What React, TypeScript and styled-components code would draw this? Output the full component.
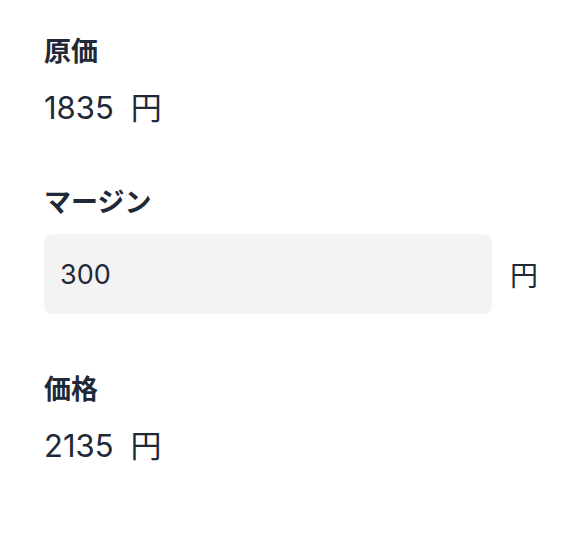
import styled, { createGlobalStyle } from "styled-components";

const GlobalStyle = createGlobalStyle`
  html, body {
    margin: 0;
    padding: 0;
    background: #ffffff;
  }
  body {
    font-family: Inter, "Noto Sans CJK JP", sans-serif;
    color: #1f2937;
  }
`;

const Form = styled.div`
  display: flex;
  flex-direction: column;
  gap: 50px;
  padding: 32px 48px 0 44px;
  max-width: 494px;
`;

const Field = styled.div`
  display: flex;
  flex-direction: column;
  gap: 11px;
`;

const Label = styled.label`
  font-size: 27px;
  font-weight: 700;
  line-height: 40px;
  color: #1f2937;
`;

const Value = styled.div`
  display: flex;
  align-items: center;
  gap: 17px;
  font-size: 31px;
  line-height: 50px;
  color: #1f2937;
`;

const InputRow = styled.div`
  display: flex;
  align-items: center;
  gap: 18px;
  margin-bottom: 6px;
`;

const Input = styled.input`
  flex: 1;
  min-width: 0;
  height: 80px;
  box-sizing: border-box;
  padding: 0 16px;
  border: none;
  border-radius: 8px;
  background: #f3f3f3;
  font-family: Inter, "Noto Sans CJK JP", sans-serif;
  font-size: 27px;
  color: #1f2937;
  outline: none;
`;

const Unit = styled.span<{ $size?: number }>`
  font-size: ${(p) => p.$size ?? 31}px;
  color: #1f2937;
`;

export default function App() {
  return (
    <>
      <GlobalStyle />
      <Form>
        <Field>
          <Label>原価</Label>
          <Value>
            <span>1835</span>
            <Unit>円</Unit>
          </Value>
        </Field>
        <Field>
          <Label>マージン</Label>
          <InputRow>
            <Input defaultValue="300" />
            <Unit $size={28}>円</Unit>
          </InputRow>
        </Field>
        <Field>
          <Label>価格</Label>
          <Value>
            <span>2135</span>
            <Unit>円</Unit>
          </Value>
        </Field>
      </Form>
    </>
  );
}
